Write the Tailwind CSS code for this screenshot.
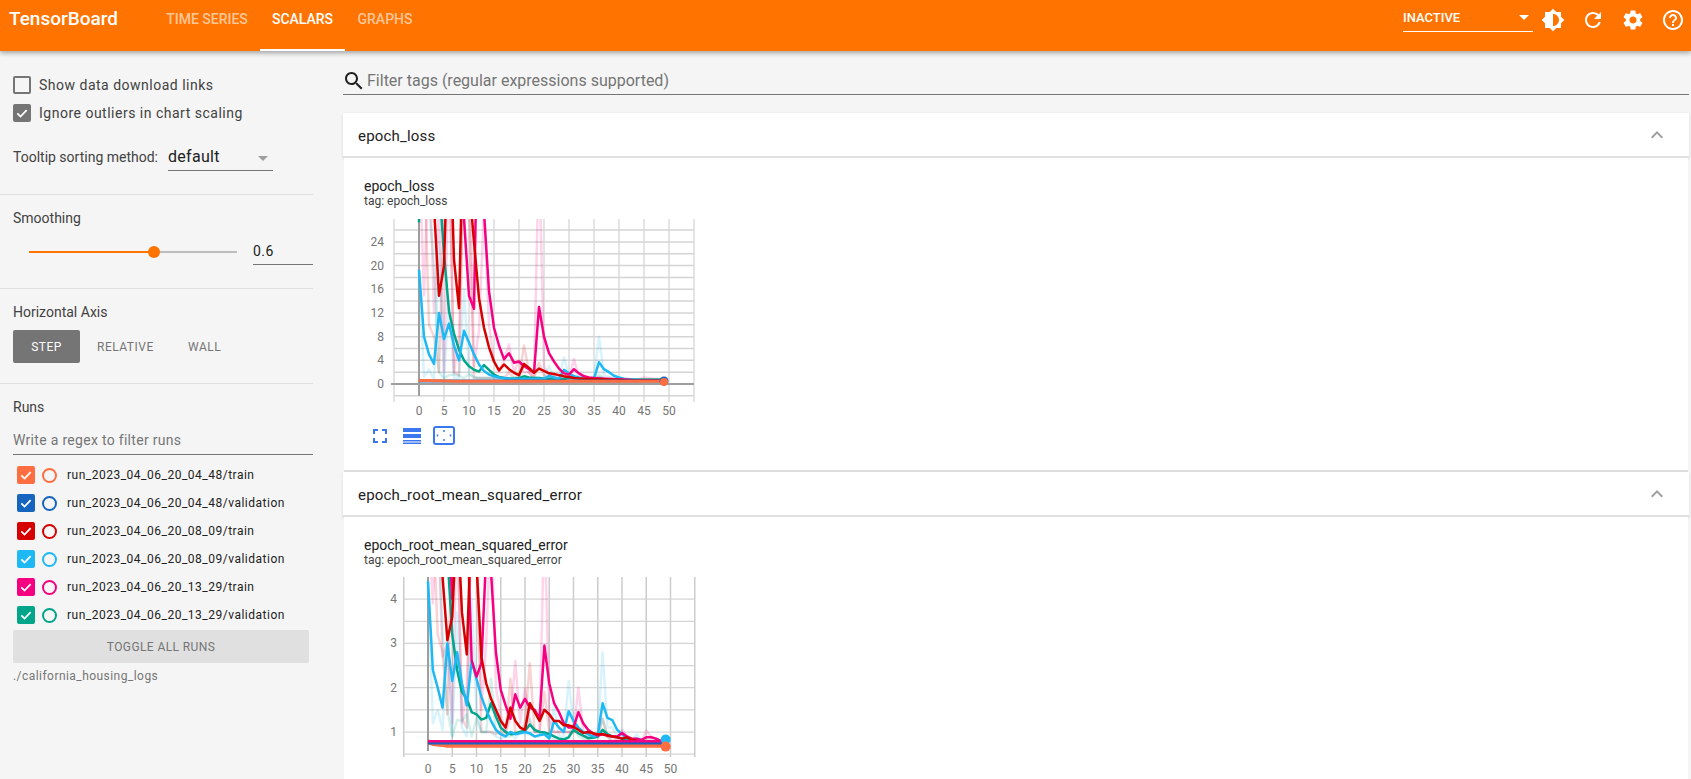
<!DOCTYPE html>
<html lang="en">
<head>
    <meta charset="UTF-8">
    <title>TensorBoard</title>
    <script src="https://cdn.jsdelivr.net/npm/@tailwindcss/browser@4"></script>
</head>
<body class="h-screen overflow-hidden bg-[#f5f5f5] font-['Roboto',sans-serif] text-[#212121]">
    <!-- Header -->
    <header class="relative z-10 flex h-[51px] items-stretch bg-[#ff7300] text-white shadow-[0_2px_5px_rgba(0,0,0,0.35)]">
        <div class="w-[154px] pl-[9px] pt-[5px] text-[19px] font-medium leading-[28px]">TensorBoard</div>
        <nav class="flex text-[14px] font-medium uppercase">
            <a class="flex w-[106px] items-start justify-center pt-[9px] leading-[20px] text-white/60">Time Series</a>
            <a class="flex w-[85px] items-start justify-center border-b-2 border-white pt-[9px] leading-[20px]">Scalars</a>
            <a class="flex w-[80px] items-start justify-center pt-[9px] leading-[20px] text-white/60">Graphs</a>
        </nav>
        <div class="ml-auto flex items-start">
            <div class="relative mt-[8px] h-[24px] w-[130px] border-b border-white pt-[1px] text-[13px] font-medium leading-[18px]">
                INACTIVE
                <span class="absolute right-[4px] top-[7px] border-x-[5px] border-t-[5px] border-x-transparent border-t-white"></span>
            </div>
            <div class="mr-[-2px] flex pt-[8px]">
                <div class="flex w-[40px] justify-center"><svg class="size-6 fill-white" viewBox="0 0 24 24"><path fill-rule="evenodd" d="M20 15.31L23.31 12 20 8.69V4h-4.69L12 .69 8.69 4H4v4.69L.69 12 4 15.31V20h4.69L12 23.31 15.31 20H20v-4.69zM12 18V6c3.31 0 6 2.69 6 6s-2.69 6-6 6z"/></svg></div>
                <div class="flex w-[40px] justify-center"><svg class="size-6 fill-white" viewBox="0 0 24 24"><path d="M17.65 6.35C16.2 4.9 14.21 4 12 4c-4.42 0-7.99 3.58-7.99 8s3.57 8 7.99 8c3.73 0 6.84-2.55 7.73-6h-2.08c-.82 2.33-3.04 4-5.65 4-3.31 0-6-2.69-6-6s2.69-6 6-6c1.66 0 3.14.69 4.22 1.78L13 11h7V4l-2.35 2.35z"/></svg></div>
                <div class="flex w-[40px] justify-center"><svg class="size-6 fill-white" viewBox="0 0 24 24"><path d="M19.14 12.94c.04-.3.06-.61.06-.94 0-.32-.02-.64-.07-.94l2.03-1.58c.18-.14.23-.41.12-.61l-1.92-3.32c-.12-.22-.37-.29-.59-.22l-2.39.96c-.5-.38-1.03-.7-1.62-.94l-.36-2.54c-.04-.24-.24-.41-.48-.41h-3.84c-.24 0-.43.17-.47.41l-.36 2.54c-.59.24-1.13.57-1.62.94l-2.39-.96c-.22-.08-.47 0-.59.22L2.74 8.87c-.12.21-.08.47.12.61l2.03 1.58c-.05.3-.09.63-.09.94s.02.64.07.94l-2.03 1.58c-.18.14-.23.41-.12.61l1.92 3.32c.12.22.37.29.59.22l2.39-.96c.5.38 1.03.7 1.62.94l.36 2.54c.05.24.24.41.48.41h3.84c.24 0 .44-.17.47-.41l.36-2.54c.59-.24 1.13-.56 1.62-.94l2.39.96c.22.08.47 0 .59-.22l1.92-3.32c.12-.22.07-.47-.12-.61l-2.01-1.58zM12 15.6c-1.98 0-3.6-1.62-3.6-3.6s1.62-3.6 3.6-3.6 3.6 1.62 3.6 3.6-1.62 3.6-3.6 3.6z"/></svg></div>
                <div class="flex w-[40px] justify-center"><svg class="size-6 fill-white" viewBox="0 0 24 24"><path d="M11 18h2v-2h-2v2zm1-16C6.48 2 2 6.48 2 12s4.48 10 10 10 10-4.48 10-10S17.52 2 12 2zm0 18c-4.41 0-8-3.59-8-8s3.59-8 8-8 8 3.59 8 8-3.59 8-8 8zm0-14c-2.21 0-4 1.79-4 4h2c0-1.1.9-2 2-2s2 .9 2 2c0 2-3 1.75-3 5h2c0-2.25 3-2.5 3-5 0-2.21-1.79-4-4-4z"/></svg></div>
            </div>
        </div>
    </header>

    <div class="flex">
        <!-- Sidebar -->
        <aside class="w-[313px] shrink-0 text-[14px] text-[#424242]">
            <section class="h-[144px] border-b border-[#e0e0e0] pt-[20px] pl-[13px]">
                <div class="flex h-[28px] items-center tracking-[0.5px]">
                    <span class="mr-[8px] size-[18px] rounded-[2px] border-2 border-[#757575]"></span>Show data download links
                </div>
                <div class="flex h-[28px] items-center tracking-[0.5px]">
                    <span class="mr-[8px] flex size-[18px] items-center justify-center rounded-[2px] bg-[#757575]">
                        <svg class="size-[14px] fill-none stroke-white stroke-[3]" viewBox="0 0 24 24"><path d="M4 12.5l5.5 5.5L20 7"/></svg>
                    </span>Ignore outliers in chart scaling
                </div>
                <div class="mt-[16px] flex h-[28px] items-center">
                    <span class="w-[155px]">Tooltip sorting method:</span>
                    <div class="relative h-[28px] w-[105px] border-b border-[#757575] pt-[2px] text-[16px] leading-[24px] tracking-[0.3px] text-[#212121]">
                        default
                        <span class="absolute right-[5px] top-[13px] border-x-[5px] border-t-[5px] border-x-transparent border-t-[#9e9e9e]"></span>
                    </div>
                </div>
            </section>
            <section class="h-[94px] border-b border-[#e0e0e0] pt-[13px] pl-[13px]">
                <div class="leading-[20px]">Smoothing</div>
                <div class="mt-[14px] flex items-start">
                    <div class="relative ml-[16px] mt-[9px] h-[2px] w-[208px] bg-[#bdbdbd]">
                        <div class="h-[2px] w-[125px] bg-[#ff7300]"></div>
                        <span class="absolute left-[119px] top-[-5px] size-[12px] rounded-full bg-[#ff7300]"></span>
                    </div>
                    <div class="ml-[16px] h-[23px] w-[60px] border-b border-[#757575] text-[14px] leading-[18px] tracking-[0.5px] text-[#212121]">0.6</div>
                </div>
            </section>
            <section class="h-[95px] border-b border-[#e0e0e0] pt-[13px] pl-[13px]">
                <div class="leading-[20px]">Horizontal Axis</div>
                <div class="mt-[8px] flex items-center text-[12px] tracking-[0.5px] text-[#757575]">
                    <span class="flex h-[33px] w-[67px] items-center justify-center rounded-[2px] bg-[#757575] text-white">STEP</span>
                    <span class="ml-[17px] w-[91px]">RELATIVE</span>
                    <span>WALL</span>
                </div>
            </section>
            <section class="pt-[13px] pl-[13px]">
                <div class="leading-[20px]">Runs</div>
                <div class="mt-[13px] h-[25px] w-[300px] border-b border-[#757575] tracking-[0.3px] leading-[20px] text-[#757575]">Write a regex to filter runs</div>
                <ul class="mt-[6px] text-[12px] tracking-[0.5px] text-[#212121]">
                    <li class="flex h-[28px] items-center pl-[4px]">
                        <span class="flex size-[18px] items-center justify-center rounded-[2px] bg-[#ff6e40]"><svg class="size-[14px] fill-none stroke-white stroke-[3]" viewBox="0 0 24 24"><path d="M4 12.5l5.5 5.5L20 7"/></svg></span>
                        <span class="ml-[7px] size-[15px] rounded-full border-2 border-[#ff6e40]"></span>
                        <span class="ml-[10px]">run_2023_04_06_20_04_48/train</span>
                    </li>
                    <li class="flex h-[28px] items-center pl-[4px]">
                        <span class="flex size-[18px] items-center justify-center rounded-[2px] bg-[#1565c0]"><svg class="size-[14px] fill-none stroke-white stroke-[3]" viewBox="0 0 24 24"><path d="M4 12.5l5.5 5.5L20 7"/></svg></span>
                        <span class="ml-[7px] size-[15px] rounded-full border-2 border-[#1565c0]"></span>
                        <span class="ml-[10px]">run_2023_04_06_20_04_48/validation</span>
                    </li>
                    <li class="flex h-[28px] items-center pl-[4px]">
                        <span class="flex size-[18px] items-center justify-center rounded-[2px] bg-[#d50000]"><svg class="size-[14px] fill-none stroke-white stroke-[3]" viewBox="0 0 24 24"><path d="M4 12.5l5.5 5.5L20 7"/></svg></span>
                        <span class="ml-[7px] size-[15px] rounded-full border-2 border-[#d50000]"></span>
                        <span class="ml-[10px]">run_2023_04_06_20_08_09/train</span>
                    </li>
                    <li class="flex h-[28px] items-center pl-[4px]">
                        <span class="flex size-[18px] items-center justify-center rounded-[2px] bg-[#1eb9f5]"><svg class="size-[14px] fill-none stroke-white stroke-[3]" viewBox="0 0 24 24"><path d="M4 12.5l5.5 5.5L20 7"/></svg></span>
                        <span class="ml-[7px] size-[15px] rounded-full border-2 border-[#1eb9f5]"></span>
                        <span class="ml-[10px]">run_2023_04_06_20_08_09/validation</span>
                    </li>
                    <li class="flex h-[28px] items-center pl-[4px]">
                        <span class="flex size-[18px] items-center justify-center rounded-[2px] bg-[#f50080]"><svg class="size-[14px] fill-none stroke-white stroke-[3]" viewBox="0 0 24 24"><path d="M4 12.5l5.5 5.5L20 7"/></svg></span>
                        <span class="ml-[7px] size-[15px] rounded-full border-2 border-[#f50080]"></span>
                        <span class="ml-[10px]">run_2023_04_06_20_13_29/train</span>
                    </li>
                    <li class="flex h-[28px] items-center pl-[4px]">
                        <span class="flex size-[18px] items-center justify-center rounded-[2px] bg-[#00a58a]"><svg class="size-[14px] fill-none stroke-white stroke-[3]" viewBox="0 0 24 24"><path d="M4 12.5l5.5 5.5L20 7"/></svg></span>
                        <span class="ml-[7px] size-[15px] rounded-full border-2 border-[#00a58a]"></span>
                        <span class="ml-[10px]">run_2023_04_06_20_13_29/validation</span>
                    </li>
                </ul>
                <div class="mt-[1px] flex h-[33px] w-[296px] items-center justify-center rounded-[2px] bg-[#e0e0e0] text-[12px] tracking-[0.4px] text-[#757575]">TOGGLE ALL RUNS</div>
                <div class="mt-[5px] text-[12px] leading-[16px] tracking-[0.45px] text-[#757575]">./california_housing_logs</div>
            </section>
        </aside>

        <!-- Main -->
        <main class="flex-1 pl-[30px] pr-[2px]">
            <div class="mt-[12px] flex h-[32px] items-center border-b border-[#757575] pt-[4px] text-[16px] text-[#757575]">
                <svg class="ml-[-1px] size-[24px] fill-[#212121]" viewBox="0 0 24 24"><path d="M15.5 14h-.79l-.28-.27C15.41 12.59 16 11.11 16 9.5 16 5.91 13.09 3 9.5 3S3 5.91 3 9.5 5.91 16 9.5 16c1.61 0 3.09-.59 4.23-1.57l.27.28v.79l5 4.99L20.49 19l-4.99-5zm-6 0C7.01 14 5 11.99 5 9.5S7.01 5 9.5 5 14 7.01 14 9.5 11.99 14 9.5 14z"/></svg>
                <span class="ml-[1px]">Filter tags (regular expressions supported)</span>
            </div>

            <div class="mt-[18px] flex h-[45px] items-center justify-between border-b-2 border-[#e0e0e0] bg-white pl-[15px] pr-[20px] pt-[4px] text-[15px] tracking-[0.2px] shadow-[0_1px_3px_rgba(0,0,0,0.12)]">
                epoch_loss
                <svg class="mt-[-3px] size-[24px] fill-[#9e9e9e]" viewBox="0 0 24 24"><path d="M12 8l-6 6 1.41 1.41L12 10.83l4.59 4.58L18 14z"/></svg>
            </div>
            <div class="mx-[1px] h-[314px] border-b-2 border-[#e0e0e0] bg-white pl-[20px] pt-[20px]">
                <div class="text-[14px] leading-[17px]">epoch_loss</div>
                <div class="text-[12px] leading-[13px] text-[#424242]">tag: epoch_loss</div>
                <svg id="chart-loss" class="mt-[3px] block" width="340" height="215"></svg>
                <div class="flex items-center">
                    <svg class="ml-[9px] size-[14px] fill-none stroke-[#3b78f0] stroke-[2]" viewBox="0 0 14 14"><path d="M1 5V1h4M9 1h4v4M13 9v4H9M5 13H1V9"/></svg>
                    <svg class="ml-[16px] h-[16px] w-[18px] fill-[#3b78f0]" viewBox="0 0 18 16"><rect width="18" height="4"/><rect y="6" width="18" height="4"/><rect y="12" width="18" height="1.5"/><rect y="14.5" width="18" height="1.5"/></svg>
                    <svg class="ml-[12px] h-[19px] w-[22px] fill-none stroke-[#3b78f0]" viewBox="0 0 22 19"><rect x="1" y="1" width="20" height="17" rx="2" stroke-width="2"/><path d="M10 5h2M10 14h2M4.5 8.5v2M17.5 8.5v2" stroke-width="1.5"/></svg>
                </div>
            </div>

            <div class="flex h-[45px] items-center justify-between border-b-2 border-[#e0e0e0] bg-white pl-[15px] pr-[20px] pt-[4px] text-[15px] tracking-[0.2px] shadow-[0_1px_3px_rgba(0,0,0,0.12)]">
                epoch_root_mean_squared_error
                <svg class="mt-[-3px] size-[24px] fill-[#9e9e9e]" viewBox="0 0 24 24"><path d="M12 8l-6 6 1.41 1.41L12 10.83l4.59 4.58L18 14z"/></svg>
            </div>
            <div class="mx-[1px] h-[300px] bg-white pl-[20px] pt-[20px]">
                <div class="text-[14px] leading-[17px]">epoch_root_mean_squared_error</div>
                <div class="text-[12px] leading-[13px] text-[#424242]">tag: epoch_root_mean_squared_error</div>
                <svg id="chart-rmse" class="mt-[3px] block" width="340" height="215"></svg>
            </div>
        </main>
    </div>

    <script>
        // colours per run
        const ORANGE = '#ff6e40', BLUE = '#1565c0', RED = '#d50000', SKY = '#1eb9f5', PINK = '#f50080', TEAL = '#00a58a';

        function pad(arr, value) {
            const out = arr.slice();
            while (out.length < 50) out.push(value);
            return out;
        }

        function drawChart(id, cfg) {
            const svg = document.getElementById(id);
            const sx = s => cfg.x0 + s * cfg.xStep;
            const sy = v => cfg.y0 - (v - cfg.vBase) * cfg.yStep;
            let html = `<defs><clipPath id="${id}-clip"><rect x="${cfg.left}" y="${cfg.top}" width="${cfg.right - cfg.left}" height="${cfg.bottom - cfg.top}"/></clipPath></defs>`;

            // grid
            for (let s = -5; s <= 55; s += 5) {
                if (s === 0) continue;
                html += `<line x1="${sx(s)}" x2="${sx(s)}" y1="${cfg.top}" y2="${cfg.bottom + 3}" stroke="${cfg.vGrid}" stroke-width="${cfg.vWidth}"/>`;
            }
            cfg.hLines.forEach(v => {
                html += `<line x1="${cfg.left}" x2="${cfg.right}" y1="${sy(v)}" y2="${sy(v)}" stroke="${cfg.hGrid}" stroke-width="${cfg.hWidth}"/>`;
            });
            if (cfg.zeroLine !== undefined) {
                html += `<line x1="${cfg.left - 3}" x2="${cfg.right}" y1="${sy(cfg.zeroLine)}" y2="${sy(cfg.zeroLine)}" stroke="#9e9e9e" stroke-width="2"/>`;
            }
            html += `<line x1="${sx(0)}" x2="${sx(0)}" y1="${cfg.top}" y2="${cfg.bottom - 3}" stroke="#9e9e9e" stroke-width="2"/>`;

            // tick labels
            for (let s = 0; s <= 50; s += 5) {
                html += `<text x="${sx(s)}" y="${cfg.xLabelY}" text-anchor="middle" font-size="12" fill="#757575" font-family="Roboto">${s}</text>`;
            }
            cfg.yLabels.forEach(v => {
                html += `<text x="${cfg.yLabelX}" y="${sy(v) + 4}" text-anchor="end" font-size="12" fill="#757575" font-family="Roboto">${v}</text>`;
            });

            // series
            html += `<g clip-path="url(#${id}-clip)" fill="none" stroke-linejoin="round">`;
            cfg.raw.forEach(r => {
                const pts = pad(r.d, r.rest).map((v, i) => `${sx(i)},${sy(v)}`).join(' ');
                html += `<polyline points="${pts}" stroke="${r.c}" stroke-opacity="0.17" stroke-width="2.5"/>`;
            });
            cfg.smooth.forEach(r => {
                const pts = pad(r.d, r.rest).map((v, i) => `${sx(i)},${sy(v)}`).join(' ');
                html += `<polyline points="${pts}" stroke="${r.c}" stroke-width="${r.w || 2.5}"/>`;
            });
            html += '</g>';
            cfg.marks.forEach(m => {
                html += `<circle cx="${sx(49)}" cy="${sy(m.v)}" r="${m.r}" fill="${m.c}"/>`;
            });
            svg.innerHTML = html;
        }

        drawChart('chart-loss', {
            x0: 55, xStep: 5, y0: 173, vBase: 0, yStep: 5.92,
            left: 30, right: 330, top: 8, bottom: 188,
            vGrid: '#e4e4e4', vWidth: 2, hGrid: '#d4d4d4', hWidth: 1.5, zeroLine: 0, xLabelY: 204, yLabelX: 20,
            hLines: [-2, 2, 4, 6, 8, 10, 12, 14, 16, 18, 20, 22, 24, 26],
            yLabels: [0, 4, 8, 12, 16, 20, 24],
            raw: [
                { c: PINK, rest: 0.8, d: [40, 15, 40, 12, 30, 2, 40, 2, 8, 40, 40, 3, 9, 30, 10, 4, 2, 4, 6.7, 2, 4, 2, 2, 1, 40, 3, 1.5, 1.5, 1, 1, 1, 4.2, 1, 1, 1, 1, 1.2, 1, 1, 1, 1, 0.8, 0.8, 0.8, 0.8, 1.1, 1, 0.9] },
                { c: RED, rest: 0.8, d: [60, 40, 10, 8, 2, 30, 40, 2, 1.5, 40, 30, 1, 1, 1, 1, 1, 1, 1, 2, 1, 1, 6.5, 2, 1, 3.6, 1.5, 1, 1, 1, 1, 1] },
                { c: SKY, rest: 0.8, d: [19, 1.2, 2.5, 0.7, 24, 1, 14, 1, 1, 16, 2, 1, 1, 1, 1, 1, 1, 1, 1, 1, 1, 1, 1, 1, 1, 0.8, 3, 1, 1, 4.5, 1.2, 1, 1, 1, 1, 1, 8, 1.5, 1.2, 1, 1] },
                { c: TEAL, rest: 0.7, d: [30, 30, 30, 20, 2, 1, 1.5, 1.6, 1.4, 1, 1.6, 1.2, 1, 1, 1, 1, 1, 1, 1, 1, 1.5, 1, 1, 1, 1, 1, 1, 1, 1, 1, 1, 1, 1, 1, 1, 1, 1.6, 1] }
            ],
            smooth: [
                { c: TEAL, rest: 0.7, d: [27.3, 100, 100, 100, 34, 22, 12.3, 8.5, 5.8, 4, 3, 2.4, 2.1, 3.2, 2.4, 1.6, 1.2, 1, 0.9, 0.9, 1, 1.3, 1.1, 1, 1, 0.9, 0.9, 0.8, 0.8, 0.8, 1.1, 1, 0.9, 0.8, 0.8, 0.8, 1, 0.8] },
                { c: SKY, rest: 0.65, d: [19.3, 8, 5, 3.4, 12, 7.6, 10.2, 6.5, 4, 9, 7, 5, 3.3, 2.2, 1.6, 1.3, 1.1, 1, 0.9, 0.9, 0.85, 0.85, 0.85, 0.85, 0.9, 0.85, 1.4, 1.1, 0.9, 2.4, 1.8, 1.3, 1.1, 0.95, 0.9, 0.9, 3.7, 2.5, 2, 1.4, 1.1, 0.9, 0.8, 0.75] },
                { c: PINK, rest: 0.65, d: [120, 120, 100, 80, 60, 70, 80, 90, 60, 28, 14.9, 12.7, 60, 29, 15.7, 9.5, 6.5, 4.2, 5.2, 3.6, 3.8, 3, 2.5, 1.9, 13, 8, 5.2, 3.8, 2.6, 1.8, 1.6, 2.5, 1.8, 1.3, 1.1, 1, 0.95, 0.9, 0.85, 0.8, 0.8, 0.75, 0.7] },
                { c: RED, rest: 0.6, d: [120, 90, 60, 30, 14.9, 20, 48, 21, 12.8, 50, 34, 24, 14.5, 9.5, 6.2, 3.8, 2.3, 3.3, 2.5, 1.9, 1.5, 3.4, 2.7, 1.9, 2.6, 2.2, 1.8, 1.7, 1.5, 1.3, 1.2, 1, 0.95, 0.9, 0.85, 0.85, 0.8, 0.8, 0.75, 0.7, 0.7, 0.65] },
                { c: BLUE, rest: 0.5, d: [0.5], w: 3 },
                { c: ORANGE, rest: 0.45, d: [0.6, 0.6, 0.6, 0.55, 0.55, 0.5, 0.5], w: 3 }
            ],
            marks: [{ c: BLUE, v: 0.5, r: 4.5 }, { c: ORANGE, v: 0.35, r: 4 }]
        });

        drawChart('chart-rmse', {
            x0: 64, xStep: 4.85, y0: 162, vBase: 1, yStep: 44.3,
            left: 40, right: 330, top: 7, bottom: 184,
            vGrid: '#cccccc', vWidth: 1.5, hGrid: '#d4d4d4', hWidth: 1.25, xLabelY: 203, yLabelX: 33,
            hLines: [0.5, 1, 1.5, 2, 2.5, 3, 3.5, 4],
            yLabels: [1, 2, 3, 4],
            raw: [
                { c: PINK, rest: 0.8, d: [6, 3.9, 6, 2.7, 3, 1.2, 6, 1.2, 2, 6, 6, 1.5, 3, 6, 2, 1.4, 1, 1.3, 2.6, 1.2, 2, 1.2, 1, 1, 6, 1.3, 1, 1, 1, 1, 1, 2, 1, 1, 0.9, 0.9, 1, 0.9, 0.9, 0.8, 1.05, 0.9, 0.8, 0.85, 0.8, 1.03, 0.9, 0.85] },
                { c: RED, rest: 0.8, d: [6, 6, 3.2, 2.8, 1.4, 6, 6, 1.3, 1.1, 6, 5, 1, 1, 1, 0.95, 1, 0.95, 2.2, 1, 1, 1.2, 2.55, 1, 1, 1.9, 1, 1, 1, 1, 1, 1, 1, 0.9, 0.9, 0.9, 0.9, 1.3, 0.9] },
                { c: SKY, rest: 0.8, d: [4.4, 1.2, 1.5, 1.05, 3.4, 0.9, 3.7, 1.1, 0.9, 4, 1.5, 1, 1, 1, 0.9, 0.85, 0.9, 1, 0.85, 1, 0.95, 0.95, 0.9, 0.9, 0.95, 0.9, 1.6, 0.9, 0.9, 2.15, 1.2, 1, 0.95, 0.9, 0.9, 0.95, 2.8, 1.1, 1.1, 0.9, 0.85, 0.8, 0.8, 0.95, 0.8] },
                { c: TEAL, rest: 0.75, d: [6, 6, 6, 3.2, 1.5, 0.9, 1.27, 1.25, 1.4, 0.9, 1.3, 1, 1, 2.2, 1, 0.95, 0.9, 0.9, 1, 1, 1.05, 1.3, 1, 1, 1, 0.9, 0.85, 0.85, 0.85, 0.9, 1.2, 0.9, 0.85, 0.85, 0.9, 0.9, 1.3, 0.9] }
            ],
            smooth: [
                { c: TEAL, rest: 0.75, d: [6, 6, 6, 6, 5, 3.2, 2.4, 1.9, 1.75, 1.45, 1.4, 1.28, 1.32, 1.65, 1.35, 1.1, 1, 0.95, 0.96, 1, 1.03, 1.17, 1.05, 1, 0.99, 0.95, 0.9, 0.85, 0.83, 0.88, 1.05, 0.97, 0.92, 0.86, 0.87, 0.89, 1.05, 0.95, 0.9, 0.88, 0.85, 0.82, 0.8, 0.78] },
                { c: SKY, rest: 0.75, d: [4.4, 2.4, 2, 1.55, 3, 2.15, 2.8, 2.1, 1.6, 2.6, 2.2, 1.8, 1.5, 1.25, 1.05, 0.95, 0.9, 1, 0.95, 0.97, 1, 0.97, 0.9, 0.93, 0.95, 0.85, 1.25, 1.1, 1, 1.47, 1.25, 1.1, 1, 0.95, 0.9, 0.92, 1.65, 1.32, 1.27, 1.05, 0.95, 0.87, 0.83, 0.85, 0.82, 0.78, 0.75] },
                { c: PINK, rest: 0.8, d: [8, 8, 7, 6.5, 6, 4, 7, 8, 6, 2.62, 2.25, 2.55, 5, 4.6, 2.8, 1.95, 1.6, 1.3, 1.85, 1.55, 1.75, 1.55, 1.5, 1.3, 2.95, 2.1, 1.65, 1.45, 1.2, 1.1, 1.1, 1.45, 1.2, 1.05, 0.97, 0.92, 0.95, 0.92, 0.9, 0.9, 0.98, 0.9, 0.85, 0.85, 0.82, 0.88, 0.88, 0.85] },
                { c: RED, rest: 0.77, d: [8, 8, 6, 4.5, 3.07, 3.6, 6, 3.7, 2.75, 6, 4.8, 2.7, 2.1, 1.75, 1.5, 1.25, 1.1, 1.55, 1.25, 1.1, 1.05, 1.65, 1.45, 1.25, 1.5, 1.4, 1.25, 1.25, 1.15, 1.15, 1.12, 1.05, 0.98, 1, 0.97, 0.95, 0.95, 0.92, 0.9, 0.88, 0.85, 0.88, 0.83, 0.8, 0.78] },
                { c: ORANGE, rest: 0.7, d: [0.78, 0.74, 0.73, 0.72], w: 5 },
                { c: PINK, rest: 0.78, d: [0.78], w: 3.5 },
                { c: BLUE, rest: 0.74, d: [0.74], w: 2 }
            ],
            marks: [{ c: SKY, v: 0.83, r: 5 }, { c: ORANGE, v: 0.67, r: 5 }]
        });
    </script>
</body>
</html>
